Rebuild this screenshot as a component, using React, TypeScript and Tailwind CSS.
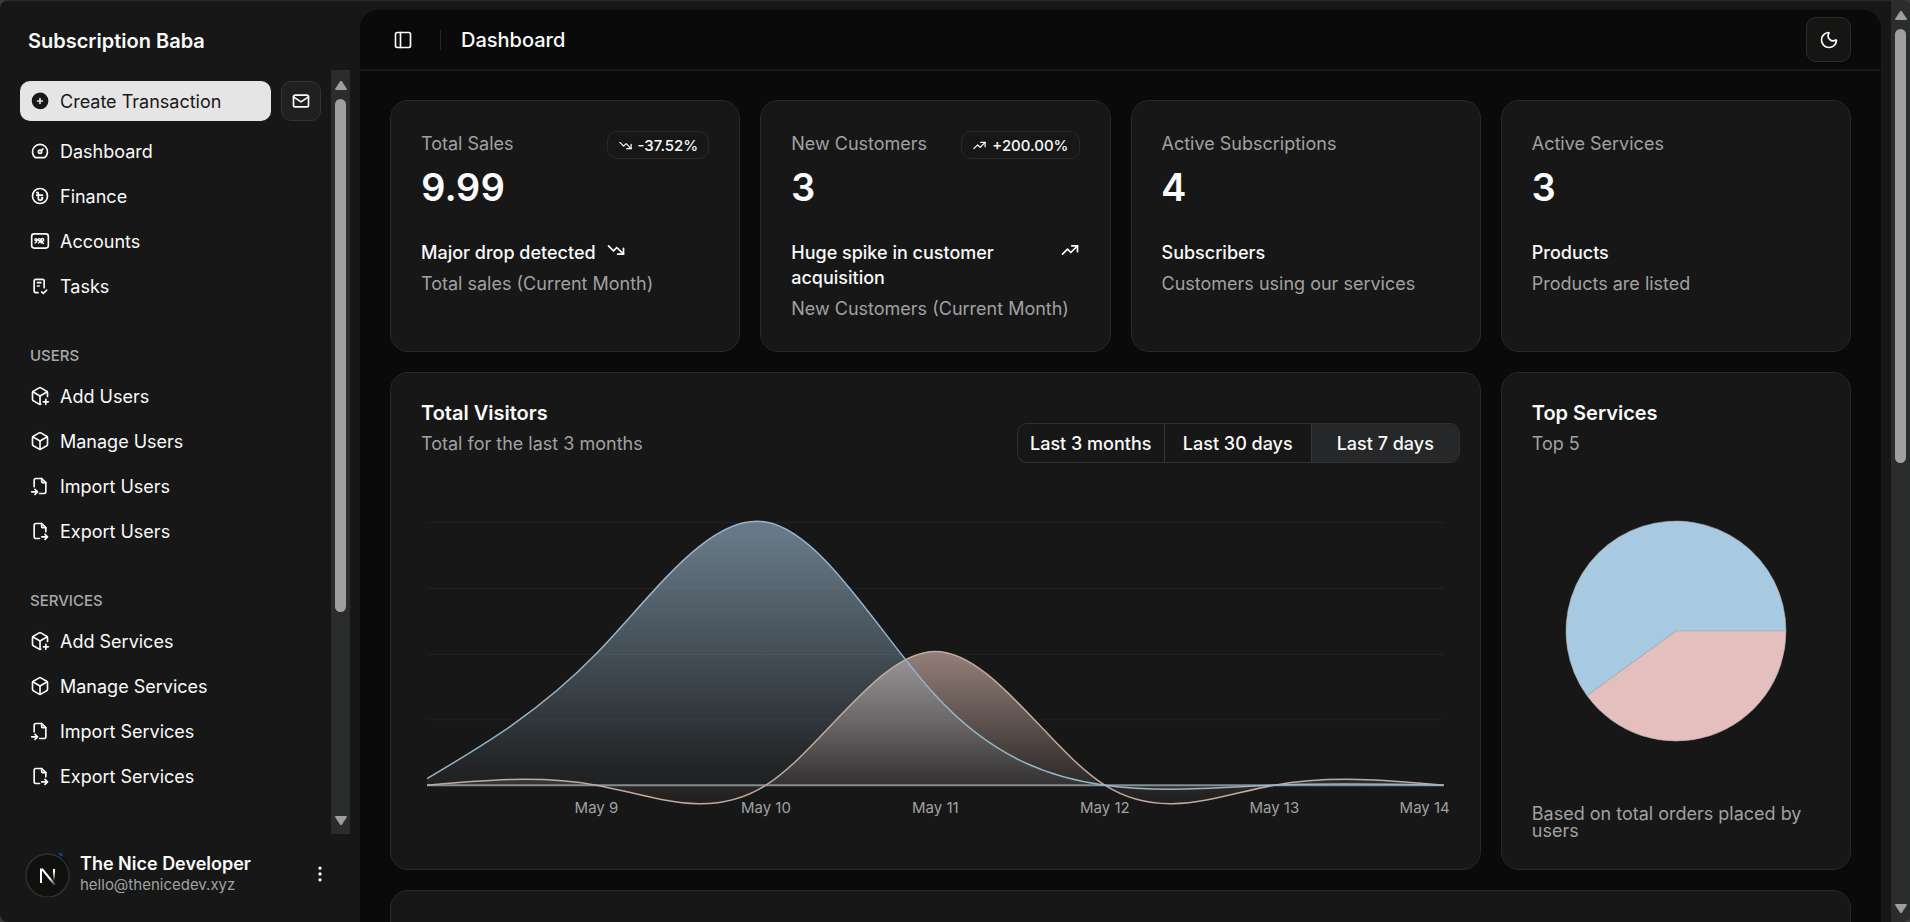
import { useState } from "react";
import type { ComponentType, ReactNode } from "react";
import { Moon, PanelLeft } from "lucide-react";
import {
  TbChecklist,
  TbCirclePlusFilled,
  TbCoinTaka,
  TbCube,
  TbCubePlus,
  TbDashboard,
  TbDotsVertical,
  TbFileExport,
  TbFileImport,
  TbMail,
  TbTrendingDown,
  TbTrendingUp,
} from "react-icons/tb";

function AccountsIcon({ className }: { className?: string }) {
  return (
    <svg className={className} viewBox="0 0 24 24" fill="none" stroke="currentColor" strokeWidth="2" strokeLinecap="round" strokeLinejoin="round">
      <rect x="2" y="3.500" width="20" height="17" rx="3" />
      <path strokeWidth="1.700" d="M8.500 10.500a1.300 1.300 0 1 0-2.600 0a1.300 1.300 0 0 0 2.600 0q0 3-2.400 4M12.500 10.500a1.300 1.300 0 1 0-2.600 0a1.300 1.300 0 0 0 2.600 0q0 3-2.400 4M15.500 12a1.500 1.500 0 1 0-2-1.500v4M13.500 12l2.500 3" />
    </svg>
  );
}

const mainLinks = [
  { title: "Dashboard", icon: TbDashboard },
  { title: "Finance", icon: TbCoinTaka },
  { title: "Accounts", icon: AccountsIcon },
  { title: "Tasks", icon: TbChecklist },
];

const groups = [
  {
    label: "USERS",
    links: [
      { title: "Add Users", icon: TbCubePlus },
      { title: "Manage Users", icon: TbCube },
      { title: "Import Users", icon: TbFileImport },
      { title: "Export Users", icon: TbFileExport },
    ],
  },
  {
    label: "SERVICES",
    links: [
      { title: "Add Services", icon: TbCubePlus },
      { title: "Manage Services", icon: TbCube },
      { title: "Import Services", icon: TbFileImport },
      { title: "Export Services", icon: TbFileExport },
    ],
  },
];

const stats = [
  { label: "Total Sales", value: "9.99", trend: "down", change: "-37.52%", title: "Major drop detected", note: "Total sales (Current Month)" },
  { label: "New Customers", value: "3", trend: "up", change: "+200.00%", title: "Huge spike in customer acquisition", note: "New Customers (Current Month)" },
  { label: "Active Subscriptions", value: "4", title: "Subscribers", note: "Customers using our services" },
  { label: "Active Services", value: "3", title: "Products", note: "Products are listed" },
];

const ranges = ["Last 3 months", "Last 30 days", "Last 7 days"];

function NavLink({ title, icon: Icon }: { title: string; icon: ComponentType<{ className?: string }> }) {
  return (
    <li>
      <a href="#" className="flex h-10 items-center gap-2.5 rounded-lg px-2.5 hover:bg-neutral-800">
        <Icon className="size-5 shrink-0" />
        <span>{title}</span>
      </a>
    </li>
  );
}

function ScrollRail({ thumb, className }: { thumb: string; className: string }) {
  return (
    <div aria-hidden="true" className={`flex w-[19px] shrink-0 flex-col items-center bg-[#2b2d2c] ${className}`}>
      <svg className="mb-2 h-[11px] w-3 shrink-0" viewBox="0 0 12 11" fill="#9f9f9f">
        <path d="M5 1.500a1.200 1.200 0 0 1 2 0l4.800 7.300q.5 1.200-.8 1.200H1q-1.300 0-.8-1.200z" />
      </svg>
      <div className={`w-[11px] rounded-full bg-[#9f9f9f] ${thumb}`} />
      <svg className="mt-auto h-[11px] w-3 shrink-0" viewBox="0 0 12 11" fill="#9f9f9f">
        <path d="M5 9.500a1.200 1.200 0 0 0 2 0l4.800-7.300Q12.300 1 11 1H1Q-.3 1 .2 2.200z" />
      </svg>
    </div>
  );
}

function Avatar() {
  return (
    <svg className="size-[46px] shrink-0" viewBox="0 0 46 46" role="img" aria-label="The Nice Developer">
      <defs>
        <linearGradient id="nStem" x1="0" y1="0" x2="0" y2="1">
          <stop offset="0.200" stopColor="#fff" />
          <stop offset="1" stopColor="#fff" stopOpacity="0" />
        </linearGradient>
        <linearGradient id="nDiagonal" x1="0.600" y1="0.600" x2="1" y2="1">
          <stop offset="0" stopColor="#fff" />
          <stop offset="1" stopColor="#fff" stopOpacity="0.100" />
        </linearGradient>
      </defs>
      <path d="M33 2a24 24 0 0 1 12 14l-3 2L32 6z" fill="#0c0d0d" />
      <path d="M34 2q3-1.500 5 2l-2 2z" fill="#1f3f70" />
      <circle cx="23.500" cy="24.500" r="21.500" fill="#10110f" stroke="#2e302f" strokeWidth="1.500" />
      <path d="M17 32V18.500h1.500L31 34" fill="none" stroke="url(#nDiagonal)" strokeWidth="2" />
      <path d="M29 18h2v12h-2z" fill="url(#nStem)" />
    </svg>
  );
}

function Sidebar() {
  return (
    <aside className="flex w-[360px] shrink-0 flex-col">
      <div className="flex h-[69px] shrink-0 items-center px-7">
        <a href="#" className="pt-2.5 text-xl leading-7 font-semibold">Subscription Baba</a>
      </div>
      <div className="flex min-h-0 flex-1">
        <nav className="min-w-0 flex-1 overflow-hidden pt-[11px] pr-2.5 pl-5">
          <div className="mb-2.5 flex gap-2.5">
            <button className="flex h-10 flex-1 items-center gap-2.5 rounded-[10px] bg-neutral-200 px-2.5 text-neutral-900">
              <TbCirclePlusFilled className="size-5" />
              Create Transaction
            </button>
            <button aria-label="Inbox" className="flex size-10 items-center justify-center rounded-[10px] border border-[#333] bg-[#202020]">
              <TbMail className="size-5" />
            </button>
          </div>
          <ul className="flex flex-col gap-[5px]">
            {mainLinks.map((link) => (
              <NavLink key={link.title} {...link} />
            ))}
          </ul>
          {groups.map((group) => (
            <section key={group.label} className="mt-[30px]">
              <h2 className="flex h-10 items-center px-2.5 pb-0.5 text-[15px] font-medium text-[#a9a9a9]">{group.label}</h2>
              <ul className="flex flex-col gap-[5px]">
                {group.links.map((link) => (
                  <NavLink key={link.title} {...link} />
                ))}
              </ul>
            </section>
          ))}
        </nav>
        <ScrollRail thumb="h-[513px]" className="mr-2.5 pt-2.5 pb-2" />
      </div>
      <div className="flex h-[88px] shrink-0 items-center gap-2.5 pr-[30px] pb-2 pl-6">
        <Avatar />
        <div className="min-w-0 flex-1">
          <p className="leading-[22px] font-semibold">The Nice Developer</p>
          <p className="text-[15px] leading-5 text-neutral-400">hello@thenicedev.xyz</p>
        </div>
        <button aria-label="Account menu">
          <TbDotsVertical className="size-5" />
        </button>
      </div>
    </aside>
  );
}

function Card({ className = "", children }: { className?: string; children?: ReactNode }) {
  return (
    <section className={`rounded-[18px] border border-[#282828] bg-[#171717] ${className}`}>{children}</section>
  );
}

function StatCard({ stat }: { stat: (typeof stats)[number] }) {
  const Trend = stat.trend === "up" ? TbTrendingUp : TbTrendingDown;
  return (
    <Card className="p-[30px]">
      <div className="flex items-start justify-between">
        <div>
          <p className="text-neutral-400">{stat.label}</p>
          <p className="mt-2 text-[38px] leading-[46px] font-semibold tabular-nums">{stat.value}</p>
        </div>
        {stat.trend && (
          <span className="flex h-7 items-center gap-[5px] rounded-[10px] border border-[#282828] px-2.5 text-[15px] font-medium">
            <Trend className="size-[15px]" />
            {stat.change}
          </span>
        )}
      </div>
      <div className="mt-[30px] flex items-start gap-2.5">
        <p className="font-medium">{stat.title}</p>
        {stat.trend && <Trend className="size-5 shrink-0" />}
      </div>
      <p className="mt-1.5 text-neutral-400">{stat.note}</p>
    </Card>
  );
}

const visitors = [
  { day: "May 8", desktop: 3, mobile: 0 },
  { day: "May 9", desktop: 60, mobile: 0 },
  { day: "May 10", desktop: 120, mobile: 0 },
  { day: "May 11", desktop: 41, mobile: 61 },
  { day: "May 12", desktop: 0, mobile: 0 },
  { day: "May 13", desktop: 0, mobile: 0 },
  { day: "May 14", desktop: 0, mobile: 0 },
];

const chartWidth = 1016;
const chartHeight = 263;
const step = chartWidth / (visitors.length - 1);

// Natural cubic spline through evenly spaced points, as bezier segments
function naturalCurve(values: number[]) {
  const y = values.map((v) => chartHeight - (v / 120) * chartHeight);
  const n = y.length - 1;
  const a = [2];
  const r = [y[0] + 2 * y[1]];
  for (let i = 1; i < n; i++) {
    const last = i === n - 1;
    const m = (last ? 2 : 1) / a[i - 1];
    a[i] = (last ? 7 : 4) - m;
    r[i] = (last ? 8 * y[i] + y[n] : 4 * y[i] + 2 * y[i + 1]) - m * r[i - 1];
  }
  const c1: number[] = [];
  c1[n - 1] = r[n - 1] / a[n - 1];
  for (let i = n - 2; i >= 0; i--) c1[i] = (r[i] - c1[i + 1]) / a[i];

  let d = `M0 ${y[0]}`;
  for (let i = 0; i < n; i++) {
    const c2 = i === n - 1 ? (y[n] + c1[i]) / 2 : 2 * y[i + 1] - c1[i + 1];
    d += `C${(i + 1 / 3) * step} ${c1[i]} ${(i + 2 / 3) * step} ${c2} ${(i + 1) * step} ${y[i + 1]}`;
  }
  return d;
}

function VisitorsChart() {
  const desktop = naturalCurve(visitors.map((v) => v.desktop));
  const mobile = naturalCurve(visitors.map((v) => v.mobile));
  const close = `L${chartWidth} ${chartHeight}L0 ${chartHeight}Z`;

  return (
    <svg viewBox="0 -11 1016 311" className="block w-full overflow-visible" role="img" aria-label="Total visitors">
      <defs>
        <linearGradient id="fillDesktop" x1="0" y1="0" x2="0" y2="1">
          <stop offset="5%" stopColor="#a8c9e2" stopOpacity="0.550" />
          <stop offset="95%" stopColor="#a8c9e2" stopOpacity="0.060" />
        </linearGradient>
        <linearGradient id="fillMobile" x1="0" y1="0" x2="0" y2="1">
          <stop offset="5%" stopColor="#e5c3b8" stopOpacity="0.580" />
          <stop offset="95%" stopColor="#e5c3b8" stopOpacity="0.060" />
        </linearGradient>
      </defs>
      {[0, 66, 132, 197].map((y) => (
        <path key={y} d={`M0 ${y + 0.5}H${chartWidth}`} stroke="#212121" />
      ))}
      <path d={mobile + close} fill="url(#fillMobile)" />
      <path d={desktop + close} fill="url(#fillDesktop)" />
      <path d={`M0 ${chartHeight}H${chartWidth}`} stroke="#838d8e" strokeWidth="2" />
      <path d={mobile} fill="none" stroke="#bfaaa2" strokeWidth="1.500" />
      <path d={desktop} fill="none" stroke="#96b5cb" strokeWidth="1.500" />
      {visitors.slice(1).map((v, i) => (
        <text
          key={v.day}
          x={i === visitors.length - 2 ? chartWidth - 19 : (i + 1) * step}
          y="291"
          textAnchor="middle"
          className="fill-neutral-400 text-[15px]"
        >
          {v.day}
        </text>
      ))}
    </svg>
  );
}

function ServicesPie() {
  return (
    <svg viewBox="0 0 222 222" className="size-[222px]" role="img" aria-label="Top services by orders" stroke="#a9b0b0" strokeWidth="0.600">
      <path d="M111 111L22 175.700A110 110 0 1 1 221 111Z" fill="#a8c9e2" />
      <path d="M111 111H221A110 110 0 0 1 22 175.700Z" fill="#e5bebe" />
    </svg>
  );
}

export default function App() {
  const [range, setRange] = useState("Last 7 days");

  return (
    <div className="h-screen bg-[#3b3a3a] font-[Inter,sans-serif] text-[18px] leading-[25px] text-neutral-50">
      <div className="flex h-full overflow-hidden rounded-lg border-t border-[#2b2b2b] bg-[#171717]">
        <Sidebar />
        <div className="mt-[9px] mr-2.5 min-w-0 flex-1 overflow-hidden rounded-t-[18px] bg-[#0a0a0a]">
          <header className="flex h-[61px] items-center border-b-2 border-[#181818] px-[30px]">
            <button aria-label="Toggle sidebar" className="flex size-[26px] items-center justify-center">
              <PanelLeft className="size-5" />
            </button>
            <div className="mr-5 ml-6 h-5 w-px bg-[#262626]" />
            <h1 className="text-xl font-medium">Dashboard</h1>
            <button aria-label="Toggle theme" className="ml-auto flex size-[45px] items-center justify-center rounded-[10px] border border-[#2c2c2c] bg-[#151514]">
              <Moon className="size-5" />
            </button>
          </header>
          <main className="grid grid-cols-4 gap-5 px-[30px] pt-[29px] pb-[30px]">
            {stats.map((stat) => (
              <StatCard key={stat.label} stat={stat} />
            ))}
            <Card className="col-span-3 min-h-[498px] pt-[30px]">
              <div className="flex items-start justify-between pr-5 pl-[30px]">
                <div>
                  <h2 className="text-xl leading-5 font-semibold">Total Visitors</h2>
                  <p className="mt-2 text-neutral-400">Total for the last 3 months</p>
                </div>
                <div className="mt-5 flex h-10 divide-x divide-[#363636] overflow-hidden rounded-[10px] border border-[#303030] font-medium">
                  {ranges.map((r) => (
                    <button
                      key={r}
                      onClick={() => setRange(r)}
                      className={`w-[147px] whitespace-nowrap ${range === r ? "bg-[#262728]" : "hover:bg-neutral-800"}`}
                    >
                      {r}
                    </button>
                  ))}
                </div>
              </div>
              <div className="mt-12 px-9">
                <VisitorsChart />
              </div>
            </Card>
            <Card className="flex flex-col p-[30px]">
              <h2 className="text-xl leading-5 font-semibold">Top Services</h2>
              <p className="mt-2 text-neutral-400">Top 5</p>
              <div className="flex flex-1 items-center justify-center">
                <ServicesPie />
              </div>
              <p className="leading-[17px] text-neutral-400">Based on total orders placed by users</p>
            </Card>
            <Card className="col-span-4 h-72" />
          </main>
        </div>
        <ScrollRail thumb="h-[434px]" className="pt-[9px] pb-2" />
      </div>
    </div>
  );
}
